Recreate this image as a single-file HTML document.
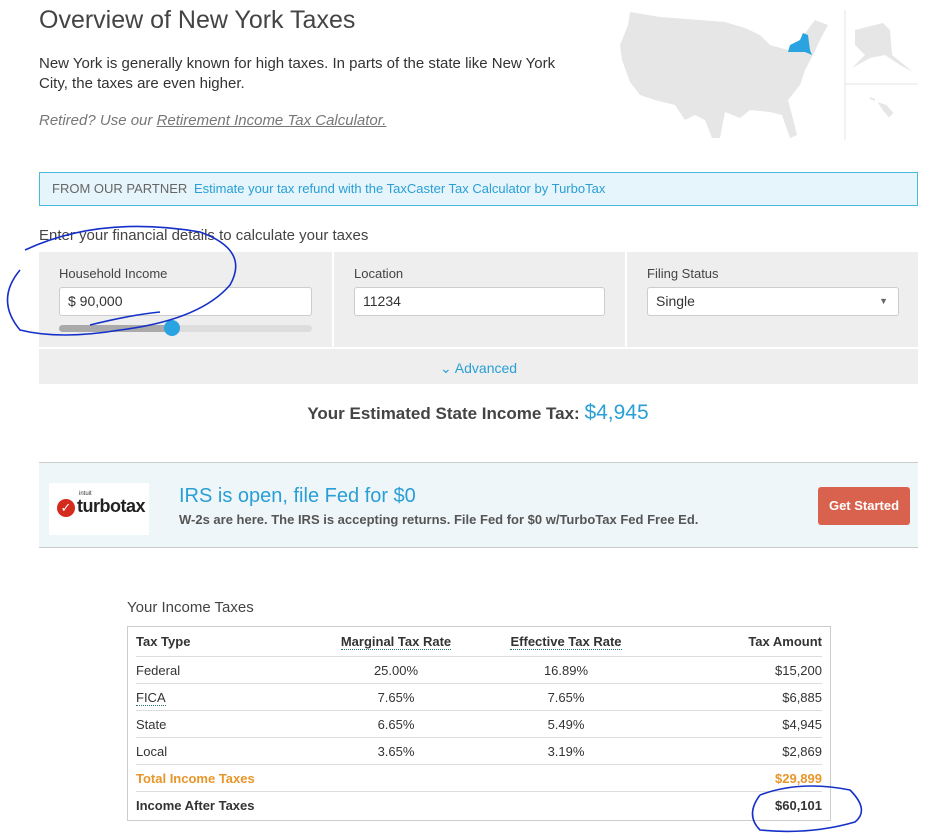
<!DOCTYPE html>
<html><head><style>
body{margin:0;background:#fff;font-family:"Liberation Sans",sans-serif;color:#333;width:931px;height:837px;overflow:hidden;position:relative}
.a{position:absolute}
h1{position:absolute;left:39px;top:6px;margin:0;font-weight:normal;font-size:25px;color:#444}
.p{font-size:15px;color:#333;line-height:20px}
.cell{position:absolute;top:252px;height:95px;background:#eee}
.lab{position:absolute;left:20px;top:14px;font-size:13px;color:#444}
.inp{position:absolute;left:20px;top:35px;border:1px solid #ccc;border-radius:3px;background:#fff;font-size:14px;line-height:27px;padding-left:8px;box-sizing:border-box;width:253px;height:29px}
table{border-collapse:collapse;font-size:13px;width:686px;table-layout:fixed}
td{height:26px;border-bottom:1px solid #ddd;padding:0}
tr:last-child td{border-bottom:none}
.c{text-align:center}.r{text-align:right}
.u{border-bottom:1px dotted #277}
</style></head><body>
<h1>Overview of New York Taxes</h1>
<div class="a p" style="left:39px;top:54px;width:545px">New York is generally known for high taxes. In parts of the state like New York City, the taxes are even higher.</div>
<div class="a p" style="left:39px;top:111px;color:#777;font-style:italic">Retired? Use our <span style="text-decoration:underline">Retirement Income Tax Calculator.</span></div>
<svg class="a" style="left:600px;top:0" width="331" height="150" viewBox="0 0 331 150">
<path d="M30 12 L60 17 L125 22 L145 28 L160 35 L170 45 L188 50 L200 40 L215 20 L228 25 L220 40 L213 55 L205 70 L200 85 L188 100 L192 115 L197 135 L190 138 L182 115 L170 112 L150 110 L140 118 L125 112 L120 138 L112 138 L105 120 L95 115 L85 120 L75 105 L55 100 L40 95 L30 82 L22 60 L20 45 L28 25 Z" fill="#e6e6e6"/>
<path d="M188 52 L190 45 L200 40 L203 33 L208 35 L210 50 L212 55 L205 52 Z" fill="#2ba3e0"/>
<line x1="245" y1="10" x2="245" y2="140" stroke="#e4e4e4"/>
<line x1="245" y1="84" x2="318" y2="84" stroke="#e4e4e4"/>
<path d="M255 30 L283 23 L290 30 L292 55 L313 72 L300 65 L285 55 L270 58 L252 68 L265 55 L255 45 Z" fill="#e6e6e6"/>
<path d="M270 98 L275 100 M280 104 L286 106 L292 113 L289 116 L284 110 Z" fill="#e6e6e6" stroke="#e6e6e6" stroke-width="2"/>
</svg>
<div class="a" style="left:39px;top:172px;width:879px;border:1px solid #4bb8de;background:#e5f5fb;font-size:13px;line-height:32px;box-sizing:border-box;padding-left:12px;height:34px"><span style="color:#666">FROM OUR PARTNER</span> <span style="color:#2a9fd6;margin-left:3px">Estimate your tax refund with the TaxCaster Tax Calculator by TurboTax</span></div>
<div class="a p" style="left:39px;top:226px;color:#444">Enter your financial details to calculate your taxes</div>
<div class="cell" style="left:39px;width:293px"><div class="lab">Household Income</div><div class="inp">$ 90,000</div>
<div class="a" style="left:20px;top:73px;width:253px;height:7px;background:#ddd;border-radius:4px"></div><div class="a" style="left:20px;top:73px;width:113px;height:7px;background:#aaa;border-radius:4px"></div><div class="a" style="left:125px;top:68px;width:16px;height:16px;background:#2ba3e0;border-radius:50%"></div></div>
<div class="cell" style="left:334px;width:291px"><div class="lab">Location</div><div class="inp" style="width:251px">11234</div></div>
<div class="cell" style="left:627px;width:291px"><div class="lab">Filing Status</div><div class="inp" style="width:252px">Single<span style="position:absolute;right:10px;font-size:9px;color:#666">▼</span></div></div>
<div class="a" style="left:39px;top:349px;width:879px;height:35px;background:#eee;text-align:center;line-height:38px;color:#2a9fd6;font-size:14px">⌄ Advanced</div>
<div class="a" style="left:0;top:401px;width:956px;text-align:center;font-size:17px;font-weight:bold;color:#444">Your Estimated State Income Tax: <span style="color:#2a9fd6;font-weight:normal;font-size:21px">$4,945</span></div>
<div class="a" style="left:39px;top:462px;width:879px;height:86px;background:#eef6f9;border-top:1px solid #ccc;border-bottom:1px solid #ccc;box-sizing:border-box">
<div class="a" style="left:10px;top:20px;width:100px;height:52px;background:#fff"><div class="a" style="left:8px;top:16px;width:18px;height:18px;border-radius:50%;background:#d52b1e;color:#fff;font-size:13px;text-align:center;line-height:18px">✓</div><div class="a" style="left:30px;top:8px;font-size:6px">intuit</div><div class="a" style="left:28px;top:13px;font-size:18px;font-weight:bold;letter-spacing:-0.5px;color:#222">turbotax</div></div>
<div class="a" style="left:140px;top:22px;font-size:20px;color:#2a9fd6">IRS is open, file Fed for $0</div>
<div class="a" style="left:140px;top:49px;font-size:13px;font-weight:bold;color:#555">W-2s are here. The IRS is accepting returns. File Fed for $0 w/TurboTax Fed Free Ed.</div>
<div class="a" style="left:779px;top:24px;width:92px;height:38px;background:#d9624e;border-radius:3px;color:#fff;font-weight:bold;font-size:13px;text-align:center;line-height:38px">Get Started</div></div>
<div class="a p" style="left:127px;top:598px;color:#444">Your Income Taxes</div>
<div class="a" style="left:127px;top:626px;width:704px;height:195px;border:1px solid #ccc;box-sizing:border-box;padding:0 8px">
<table>
<colgroup><col style="width:190px"><col style="width:140px"><col style="width:200px"><col style="width:156px"></colgroup>
<tr style="font-weight:bold"><td style="height:29px">Tax Type</td><td class="c"><span class="u">Marginal Tax Rate</span></td><td class="c"><span class="u">Effective Tax Rate</span></td><td class="r">Tax Amount</td></tr>
<tr><td>Federal</td><td class="c">25.00%</td><td class="c">16.89%</td><td class="r">$15,200</td></tr>
<tr><td><span class="u">FICA</span></td><td class="c">7.65%</td><td class="c">7.65%</td><td class="r">$6,885</td></tr>
<tr><td>State</td><td class="c">6.65%</td><td class="c">5.49%</td><td class="r">$4,945</td></tr>
<tr><td>Local</td><td class="c">3.65%</td><td class="c">3.19%</td><td class="r">$2,869</td></tr>
<tr style="color:#e8962a;font-weight:bold"><td>Total Income Taxes</td><td></td><td></td><td class="r">$29,899</td></tr>
<tr style="font-weight:bold"><td>Income After Taxes</td><td></td><td></td><td class="r">$60,101</td></tr>
</table></div>
<svg class="a" style="left:0;top:0" width="931" height="837">
<path d="M25 250 Q 100 215 200 232 Q 250 250 230 285 Q 200 320 120 330 Q 60 340 20 330 Q -5 300 20 270" fill="none" stroke="#1530c8" stroke-width="1.6"/>
<path d="M90 325 Q 130 315 160 312" fill="none" stroke="#1530c8" stroke-width="1.6"/>
<path d="M760 795 Q 800 780 850 790 Q 870 810 855 822 Q 810 835 760 830 Q 745 815 760 795" fill="none" stroke="#1530c8" stroke-width="1.6"/>
</svg>
</body></html>
